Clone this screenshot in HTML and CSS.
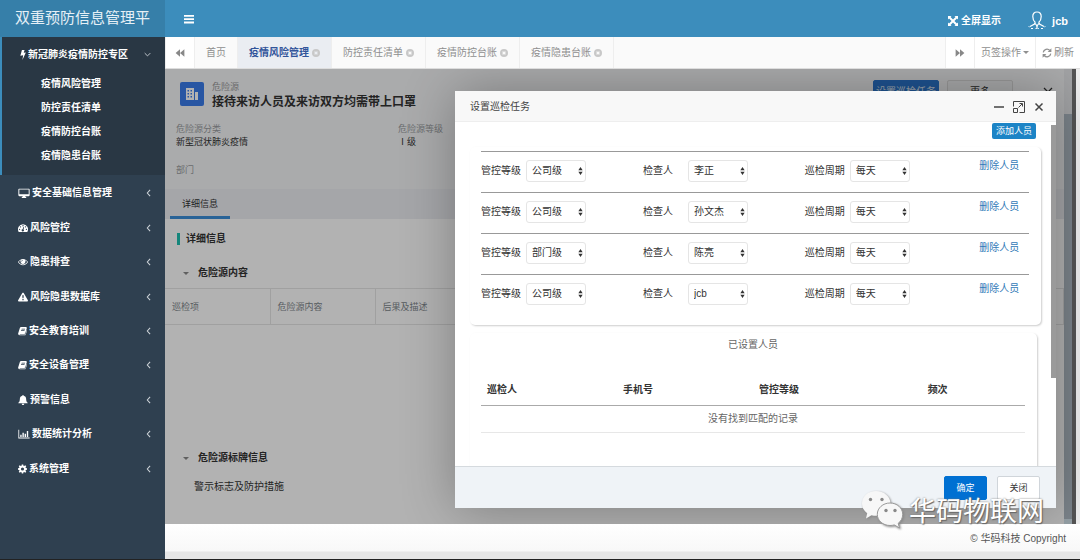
FILE: index.html
```html
<!DOCTYPE html>
<html lang="zh-CN">
<head>
<meta charset="utf-8">
<title>双重预防信息管理平台</title>
<link rel="stylesheet" href="styles.css">
</head>
<body>
<svg class="sprite" aria-hidden="true">
  <symbol id="i-book" viewBox="0 0 16 16"><path fill-rule="evenodd" d="M5.500 1H14c1.400 0 2 1 1.600 2.200L13 12c-.3.900-1 1.400-2 1.400H3.600c-.8 0-.9.900 0 .9H12c.8 0 1.200-.3 1.500-1l2-7c.5.500.6 1 .4 1.700L13.800 14c-.4 1-1.100 1.600-2.200 1.600H3C1 15.600-.3 13.800.4 12L3.300 2.700C3.700 1.600 4.400 1 5.500 1zM6.500 4l-.4 1.300h6.200l.4-1.300zM5.600 6.800 5.200 8h6.200l.4-1.200z"/></symbol>
  <symbol id="i-left" viewBox="0 0 6 10"><path d="M5 1 1.500 5 5 9" fill="none" stroke="currentColor" stroke-width="1.300"/></symbol>
  <symbol id="i-close" viewBox="0 0 16 16"><path fill-rule="evenodd" d="M8 0a8 8 0 1 1 0 16A8 8 0 0 1 8 0zM6 4.400 4.400 6 6 8l-1.600 2L6 11.600 8 10.200l2 1.400 1.600-1.600L10.200 8l1.400-2L10 4.400 8 5.800z"/></symbol>
  <symbol id="i-sort" viewBox="0 0 6 10"><path d="M3 0 5.700 4H.3zM3 10 .3 6h5.400z"/></symbol>
  <symbol id="i-fast" viewBox="0 0 16 16"><path d="M1 2l7 6-7 6zM8 2l7 6-7 6z"/></symbol>
</svg>

<div class="app">
  <aside class="sidebar">
    <div class="brand">双重预防信息管理平</div>
    <nav class="menu" aria-label="主菜单">
      <div class="group">
        <a class="item group-head" href="#"><svg class="bolt" viewBox="0 0 8 14"><path d="M2.500 0h3.700L5 4l3-.6L3.200 14l1-6.500L.3 8z"/></svg><span>新冠肺炎疫情防控专区</span><svg class="down" viewBox="0 0 10 6"><path d="M1 1l4 4 4-4" fill="none" stroke="currentColor" stroke-width="1.300"/></svg></a>
        <a class="sub" href="#">疫情风险管理</a>
        <a class="sub" href="#">防控责任清单</a>
        <a class="sub" href="#">疫情防控台账</a>
        <a class="sub" href="#">疫情隐患台账</a>
      </div>
      <div class="items">
        <a class="item" href="#"><svg class="ico wide" viewBox="0 0 18 16"><path fill-rule="evenodd" d="M1.500 1h15c.8 0 1.500.7 1.500 1.500v9c0 .8-.7 1.500-1.500 1.500H11l.5 1.500h1V16h-7v-1.500h1L7 13H1.500C.7 13 0 12.300 0 11.500v-9C0 1.700.7 1 1.500 1zm0 1.500V10h15V2.500z"/></svg><span>安全基础信息管理</span><svg class="left"><use href="#i-left"/></svg></a>
        <a class="item" href="#"><svg class="ico" viewBox="0 0 16 16"><path fill-rule="evenodd" d="M8 2a8 8 0 0 1 6.800 12.200H1.200A8 8 0 0 1 8 2zM8 3.200a1.100 1.100 0 1 0 0 2.200 1.100 1.100 0 0 0 0-2.200zM4 5a1.100 1.100 0 1 0 0 2.200A1.100 1.100 0 0 0 4 5zm8 0a1.100 1.100 0 1 0 0 2.200A1.100 1.100 0 0 0 12 5zM2.500 9a1.100 1.100 0 1 0 0 2.200A1.100 1.100 0 0 0 2.500 9zm11 0a1.100 1.100 0 1 0 0 2.200 1.100 1.100 0 0 0 0-2.200zM8.600 6.500 7.400 9.800a1.800 1.800 0 1 0 1.400.4l1-3.400z"/></svg><span>风险管控</span><svg class="left"><use href="#i-left"/></svg></a>
        <a class="item" href="#"><svg class="ico" viewBox="0 0 16 16"><path fill-rule="evenodd" d="M8 3c3.500 0 6.500 2.200 8 5-1.500 2.800-4.500 5-8 5S1.500 10.800 0 8c1.500-2.800 4.500-5 8-5zM4.500 5.200C3 6 2 7 1.300 8 2.800 10.300 5.200 11.800 8 11.800s5.200-1.500 6.700-3.800C14 7 13 6 11.500 5.200a4 4 0 1 1-7 0zM8 4.600C6.500 4.600 5.300 5.800 5.300 7.300h1C6.300 6.300 7 5.600 8 5.600z"/></svg><span>隐患排查</span><svg class="left"><use href="#i-left"/></svg></a>
        <a class="item" href="#"><svg class="ico" viewBox="0 0 16 16"><path fill-rule="evenodd" d="M8 1c.5 0 .9.200 1.100.7l6.700 11.500c.5.900-.1 1.800-1.100 1.800H1.300c-1 0-1.600-.9-1.100-1.800L6.900 1.700C7.100 1.200 7.500 1 8 1zM6.800 5l.4 5h1.600l.4-5zm.2 6v2h2v-2z"/></svg><span>风险隐患数据库</span><svg class="left"><use href="#i-left"/></svg></a>
        <a class="item" href="#"><svg class="ico small"><use href="#i-book"/></svg><span>安全教育培训</span><svg class="left"><use href="#i-left"/></svg></a>
        <a class="item" href="#"><svg class="ico small"><use href="#i-book"/></svg><span>安全设备管理</span><svg class="left"><use href="#i-left"/></svg></a>
        <a class="item" href="#"><svg class="ico" viewBox="0 0 16 16"><path d="M8 0c.7 0 1.100.5 1.100 1.200C11.600 1.700 13 3.600 13 6c0 4 1 5.500 2.500 6.500v.8H.5v-.8C2 11.500 3 10 3 6c0-2.400 1.400-4.300 3.900-4.800C6.900.5 7.300 0 8 0zM6 14h4c0 1.200-.8 2-2 2s-2-.8-2-2z"/></svg><span>预警信息</span><svg class="left"><use href="#i-left"/></svg></a>
        <a class="item" href="#"><svg class="ico wide" viewBox="0 0 18 16"><path d="M0 1h1.300v12.700H18V15H0zM3 9h2.200v3.700H3zM6.500 6h2.200v6.700H6.500zM10 7.500h2.200v5.200H10zM13.500 3h2.200v9.700h-2.200z"/></svg><span>数据统计分析</span><svg class="left"><use href="#i-left"/></svg></a>
        <a class="item" href="#"><svg class="ico small" viewBox="0 0 16 16"><path fill-rule="evenodd" d="M6.700 0h2.600l.4 2.200 1.300.5L12.900 1.400l1.800 1.800-1.300 1.900.5 1.200 2.100.4v2.600l-2.100.4-.5 1.300 1.300 1.900-1.800 1.800-1.900-1.300-1.300.5L9.300 16H6.700l-.4-2.100-1.300-.5-1.900 1.300-1.800-1.800L2.600 11l-.5-1.300L0 9.300V6.700l2.100-.4.500-1.200-1.300-1.900 1.800-1.800L5 2.700l1.300-.5zM8 5.200a2.800 2.800 0 1 0 0 5.600 2.800 2.800 0 0 0 0-5.600z"/></svg><span>系统管理</span><svg class="left"><use href="#i-left"/></svg></a>
      </div>
    </nav>
  </aside>

  <div class="main">
    <header class="topbar">
      <button class="burger" aria-label="切换菜单"><svg viewBox="0 0 10 10"><path d="M0 1h10v1.800H0zM0 4.300h10v1.800H0zM0 7.600h10v1.800H0z"/></svg></button>
      <a class="full" href="#"><svg viewBox="0 0 14 14"><path d="M0 0h5L3.500 1.500 7 5l3.500-3.500L9 0h5v5l-1.500-1.500L9 7l3.500 3.500L14 9v5H9l1.500-1.500L7 9l-3.500 3.500L5 14H0V9l1.500 1.500L5 7 1.500 3.500 0 5z"/></svg>全屏显示</a>
      <a class="user" href="#"><svg viewBox="0 0 18 19"><g fill="none" stroke="currentColor" stroke-width="1.200"><path d="M9 1C6 1 4.800 3 4.800 5.500c0 2.400.8 4.400 2.300 5.700L6.500 13 2 15.500M9 1c3 0 4.200 2 4.200 4.500 0 2.400-.8 4.400-2.300 5.700l.6 1.800 4.500 2.500M7.300 12.500 9 15l1.700-2.500"/><path d="M3 17.500h2M7.500 17.500h.8M10 17.500h.8M13 17.500h2M.8 16l.5-.6M16.700 15.400l.5.600M9 15v3"/></g></svg>jcb</a>
    </header>

    <div class="tabs">
      <button class="cell arrow" aria-label="向左"><svg class="flip"><use href="#i-fast"/></svg></button>
      <div class="strip">
        <a class="tab" href="#">首页</a>
        <a class="tab active" href="#">疫情风险管理<svg><use href="#i-close"/></svg></a>
        <a class="tab" href="#">防控责任清单<svg><use href="#i-close"/></svg></a>
        <a class="tab" href="#">疫情防控台账<svg><use href="#i-close"/></svg></a>
        <a class="tab" href="#">疫情隐患台账<svg><use href="#i-close"/></svg></a>
      </div>
      <button class="cell arrow" aria-label="向右"><svg><use href="#i-fast"/></svg></button>
      <button class="cell">页签操作<i class="caret"></i></button>
      <button class="cell"><svg class="refresh" viewBox="0 0 16 16"><path d="M2 7a6 6 0 0 1 10.500-3M14 9A6 6 0 0 1 3.500 12" fill="none" stroke="currentColor" stroke-width="2"/><path d="M15 .5V6.500H9zM1 15.500V9.500h6z"/></svg>刷新</button>
    </div>

    <div class="content">
      <section class="detail">
        <div class="summary">
          <div class="title-row">
            <span class="badge"><svg viewBox="0 0 14 14"><path fill-rule="evenodd" d="M1 1h8v12H1zM2.500 3v1.500H4V3zm3 0v1.500H7V3zm-3 3v1.500H4V6zm3 0v1.500H7V6zm-3 3v1.500H4V9zm3 0v1.500H7V9zM10 5h3v8h-3z"/></svg></span>
            <div class="heading"><small>危险源</small><h1>接待来访人员及来访双方均需带上口罩</h1></div>
            <button class="btn-under primary">设置巡检任务</button>
            <button class="btn-under">更多</button>
            <button class="x-under" aria-label="关闭详情"><svg viewBox="0 0 10 10"><path d="M1 1l8 8M9 1 1 9" stroke="currentColor" stroke-width="1.200"/></svg></button>
          </div>
          <dl class="fields">
            <div><dt>危险源分类</dt><dd>新型冠状肺炎疫情</dd></div>
            <div><dt>危险源等级</dt><dd>Ⅰ级</dd></div>
          </dl>
          <dl class="fields"><div><dt>部门</dt></div></dl>
        </div>
        <div class="subtabs"><a href="#">详细信息</a></div>
        <h2>详细信息</h2>
        <h3><i class="caret"></i>危险源内容</h3>
        <table class="risk">
          <thead><tr><th>巡检项</th><th>危险源内容</th><th>后果及描述</th><th></th></tr></thead>
        </table>
        <h3 class="sign"><i class="caret"></i>危险源标牌信息</h3>
        <p>警示标志及防护措施</p>
      </section>
      <div class="mask"></div>
      <div class="track"></div>
      <div class="edge"></div>

      <div class="modal" role="dialog" aria-labelledby="dlg-title">
        <div class="modal-head">
          <span id="dlg-title">设置巡检任务</span>
          <button aria-label="最小化"><svg viewBox="0 0 12 12"><path d="M1 6h10" stroke="currentColor" stroke-width="1.500"/></svg></button>
          <button aria-label="最大化"><svg viewBox="0 0 12 12"><g fill="none" stroke="currentColor"><path d="M.5 5.500v-5h11v11h-5M.5 7.500h4v4h-4zM5.500 6.500l3.500-3.500M6.500 2.500h3v3"/></g></svg></button>
          <button aria-label="关闭"><svg viewBox="0 0 12 12"><path d="M2.500 2.500l7 7M9.500 2.500l-7 7" stroke="currentColor" stroke-width="1.500"/></svg></button>
        </div>
        <div class="modal-main">
          <div class="modal-body">
            <button class="add">添加人员</button>
            <div class="card people">
              <div class="row">
                <div class="f"><label for="l1">管控等级</label><span class="sel"><select id="l1"><option>公司级</option></select><svg><use href="#i-sort"/></svg></span></div>
                <div class="f"><label for="p1">检查人</label><span class="sel"><select id="p1"><option>李正</option></select><svg><use href="#i-sort"/></svg></span></div>
                <div class="f"><label for="c1">巡检周期</label><span class="sel"><select id="c1"><option>每天</option></select><svg><use href="#i-sort"/></svg></span></div>
                <a href="#">删除人员</a>
              </div>
              <div class="row">
                <div class="f"><label for="l2">管控等级</label><span class="sel"><select id="l2"><option>公司级</option></select><svg><use href="#i-sort"/></svg></span></div>
                <div class="f"><label for="p2">检查人</label><span class="sel"><select id="p2"><option>孙文杰</option></select><svg><use href="#i-sort"/></svg></span></div>
                <div class="f"><label for="c2">巡检周期</label><span class="sel"><select id="c2"><option>每天</option></select><svg><use href="#i-sort"/></svg></span></div>
                <a href="#">删除人员</a>
              </div>
              <div class="row">
                <div class="f"><label for="l3">管控等级</label><span class="sel"><select id="l3"><option>部门级</option></select><svg><use href="#i-sort"/></svg></span></div>
                <div class="f"><label for="p3">检查人</label><span class="sel"><select id="p3"><option>陈亮</option></select><svg><use href="#i-sort"/></svg></span></div>
                <div class="f"><label for="c3">巡检周期</label><span class="sel"><select id="c3"><option>每天</option></select><svg><use href="#i-sort"/></svg></span></div>
                <a href="#">删除人员</a>
              </div>
              <div class="row">
                <div class="f"><label for="l4">管控等级</label><span class="sel"><select id="l4"><option>公司级</option></select><svg><use href="#i-sort"/></svg></span></div>
                <div class="f"><label for="p4">检查人</label><span class="sel"><select id="p4"><option>jcb</option></select><svg><use href="#i-sort"/></svg></span></div>
                <div class="f"><label for="c4">巡检周期</label><span class="sel"><select id="c4"><option>每天</option></select><svg><use href="#i-sort"/></svg></span></div>
                <a href="#">删除人员</a>
              </div>
            </div>
            <div class="card assigned">
              <div class="card-title">已设置人员</div>
              <table>
                <thead><tr><th>巡检人</th><th>手机号</th><th>管控等级</th><th>频次</th></tr></thead>
                <tbody><tr><td colspan="4">没有找到匹配的记录</td></tr></tbody>
              </table>
            </div>
          </div>
          <div class="bar"><div class="thumb"></div></div>
        </div>
        <div class="modal-foot">
          <button class="ok">确定</button>
          <button class="cancel">关闭</button>
        </div>
      </div>
    </div>

    <footer class="footer">© 华码科技 Copyright</footer>

    <div class="watermark">
      <svg viewBox="0 0 42 40">
        <path d="M15 1C7 1 1 6.400 1 13.500c0 4 2 7.500 5.200 9.700L5 28.500l5.500-3.300c1.400.4 3 .6 4.500.6 8 0 14.500-5.300 14.500-12.300S23 1 15 1z"/>
        <path class="front" d="M29 13c-7 0-12.700 5-12.700 11.300S22 35.500 29 35.500c1.500 0 3-.2 4.300-.6L38.500 38l-1.300-4.700c2.800-2 4.500-5.300 4.500-9C41.700 18 36 13 29 13z"/>
        <g class="eye"><circle cx="9.500" cy="9.500" r="1.700"/><circle cx="21" cy="9.500" r="1.700"/><circle cx="25" cy="20.500" r="1.700"/><circle cx="34" cy="20.500" r="1.700"/></g>
      </svg>
      <span>华码物联网</span>
    </div>
  </div>
</div>
</body>
</html>
```

FILE: styles.css
```css
* { box-sizing: border-box; }

body {
  margin: 0;
  font: 10px/14px "Liberation Sans", "Noto Sans CJK SC", sans-serif;
  color: #333;
}

a { color: inherit; text-decoration: none; }
svg { display: block; fill: currentColor; flex: none; }
button { font: inherit; color: inherit; background: none; border: 0; padding: 0; }
h1, h2, h3, p, dl, dd { margin: 0; }
table { border-collapse: collapse; table-layout: fixed; width: 100%; }
.sprite { display: none; }

.app {
  display: grid;
  grid-template-columns: 165px 1fr;
  min-height: 100vh;
  border-bottom: 1px solid #222;
}

/* sidebar */
.sidebar { display: flex; flex-direction: column; background: #2f4050; color: #fff; }
.brand {
  height: 37px;
  padding-left: 15px;
  background: #367fa9;
  color: #e6f0f6;
  font-size: 15px;
  line-height: 36px;
  white-space: nowrap;
}
.menu { flex: 1; display: flex; flex-direction: column; font-weight: bold; }
.group { padding-bottom: 7px; border-left: 2px solid #3c8dbc; background: #293744; }
.item { display: flex; align-items: center; gap: 2px; padding: 0 14px 0 18px; }
.item span { flex: 1; white-space: nowrap; }
.group-head { height: 35px; padding-left: 18px; gap: 2px; }
.bolt { width: 6px; height: 10px; }
.down { width: 7px; height: 5px; color: #cdd3d8; }
.left { width: 5px; height: 8px; color: #cdd3d8; }
.sub { display: block; padding-left: 39px; line-height: 24px; }
.items { flex: 1; display: flex; flex-direction: column; padding: 1px 0 73px; }
.items .item { flex: 1; }
.ico { width: 10px; height: 10px; }
.ico.wide { width: 12px; }
.ico.small { width: 9px; }

/* top bar */
.main { position: relative; display: flex; flex-direction: column; min-width: 0; }
.topbar {
  display: flex;
  align-items: center;
  height: 37px;
  padding: 0 12px 0 19px;
  background: #3c8dbc;
  color: #fff;
  font-weight: bold;
}
.burger { margin-right: auto; }
.burger svg { width: 10px; height: 10px; }
.full, .user { display: flex; align-items: center; gap: 3px; padding-top: 4px; }
.full svg { width: 10px; height: 10px; }
.user { gap: 6px; margin-left: 27px; font-size: 11px; }
.user svg { width: 18px; height: 19px; }

/* page tabs */
.tabs {
  display: flex;
  height: 32px;
  background: #fafafa;
  border-bottom: 1px solid #ddd;
  color: #8f8f8f;
}
.strip { flex: 1; display: flex; border-left: 1px solid #eee; }
.tab {
  display: flex;
  align-items: center;
  gap: 3px;
  padding: 0 11px;
  border-right: 1px solid #eee;
  white-space: nowrap;
}
.tab svg { width: 8px; height: 8px; color: #c8c8c8; }
.tab.active { background: #eaedf2; color: #31549a; font-weight: bold; }
.cell {
  display: flex;
  align-items: center;
  gap: 2px;
  padding: 0 6px;
  border-left: 1px solid #eee;
  background: #fff;
  white-space: nowrap;
}
.cell.arrow { padding: 0 9px; }
.cell.arrow svg { width: 10px; height: 10px; color: #888; }
.flip { transform: rotate(180deg); }
.refresh { width: 10px; height: 10px; }
.caret {
  border: 3px solid transparent;
  border-top: 3px solid currentColor;
  border-bottom: 0;
}

/* hazard details */
.content {
  position: relative;
  flex: 1;
  display: grid;
  grid-template-columns: 1fr 8px 4px;
  padding-right: 4px;
  overflow: hidden;
  background: #f0f0f0;
}
.detail { grid-area: 1 / 1; background: #fff; min-width: 0; }
.mask { grid-area: 1 / 1; background: rgba(0, 0, 0, 0.3); }
.track {
  grid-area: 1 / 2;
  border-top: 45px solid #a2a3a5;
  border-bottom: 5px solid #95a0a6;
  background: #7b838a;
}
.edge { grid-area: 1 / 3; background: #555; }

.summary { height: 120px; padding: 11px 0 0 11px; background: #f4f5f7; }
.title-row { display: flex; align-items: flex-start; gap: 8px; height: 42px; padding-right: 11px; }
.badge {
  display: grid;
  place-items: center;
  width: 24px;
  height: 24px;
  margin: 2px 0 0 4px;
  border-radius: 2px;
  background: #3a7bea;
  color: #fff;
}
.badge svg { width: 14px; height: 14px; }
.heading { flex: 1; }
.heading small { display: block; font-size: 9px; color: #999; }
h1 { font-size: 12px; line-height: 16px; }
.btn-under {
  width: 66px;
  height: 24px;
  border: 1px solid #d8d8d8;
  border-radius: 2px;
  background: #f0f1f2;
}
.btn-under.primary { border-color: #2c76cf; background: #2c76cf; color: #dce8f6; }
.x-under { margin: 7px 0 0 22px; }
.x-under svg { width: 10px; height: 10px; }
.fields { display: grid; grid-template-columns: repeat(4, 1fr); font-size: 9px; min-height: 41px; }
.fields dt { color: #9a9da1; }
.fields dd { line-height: 12px; }
.subtabs { display: flex; height: 30px; padding-left: 5px; background: #edeef3; font-size: 9px; }
.subtabs a { padding: 1px 12px 0; border-bottom: 3px solid #3c8fd9; line-height: 29px; }
h2 {
  margin: 14px 0 0 12px;
  padding-left: 6px;
  border-left: 3px solid #1fc0b0;
  font-size: 10px;
  line-height: 12px;
}
h3 {
  display: flex;
  align-items: center;
  gap: 9px;
  margin-top: 13px;
  padding-left: 18px;
  font-size: 10px;
  line-height: 30px;
}
h3 .caret { color: #888; }
.risk th {
  width: 105px;
  height: 36px;
  padding: 0 8px 0 7px;
  border: 1px solid #e6e6e6;
  border-left: 0;
  color: #80868c;
  font-size: 9px;
  font-weight: normal;
  text-align: left;
}
.risk th:last-child { width: auto; }
.sign { margin-top: 118px; }
.detail p { padding-left: 29px; line-height: 27px; }

/* dialog */
.modal {
  position: absolute;
  inset: 22px 24px 16px 290px;
  display: flex;
  flex-direction: column;
  background: #fff;
  box-shadow: 1px 1px 50px rgba(0, 0, 0, 0.3);
}
.modal-head {
  display: flex;
  align-items: center;
  gap: 8px;
  height: 31px;
  padding: 1px 11px 0 15px;
  background: #f8f8f8;
  border-bottom: 1px solid #eee;
  color: #444;
}
.modal-head span { flex: 1; }
.modal-head svg { width: 12px; height: 12px; }
.modal-main { flex: 1; display: flex; min-height: 0; }
.modal-body { flex: 1; padding: 1px 10px 0 15px; overflow: hidden; }
.add {
  display: block;
  margin: 0 5px 8px auto;
  padding: 1px 4px;
  border-radius: 2px;
  background: #1c84c6;
  color: #fff;
  font-size: 9px;
}
.bar { width: 5px; padding-top: 3px; background: #fff; }
.thumb { height: 253px; background: #9a9a9a; }
.card {
  padding: 4px 12px 10px 11px;
  border-radius: 5px;
  box-shadow: 1px 1px 2px rgba(0, 0, 0, 0.2);
}
.row {
  display: grid;
  grid-template-columns: 13fr 13fr 14fr 4fr;
  height: 41px;
  border-top: 1px solid #999;
}
.f { display: flex; align-items: center; padding-bottom: 2px; }
.f label { width: 45px; }
.sel { display: grid; align-items: center; width: 60px; }
.sel select {
  grid-area: 1 / 1;
  height: 22px;
  padding: 0 5px;
  border: 1px solid #e5e5e5;
  border-radius: 3px;
  background: #fff;
  color: #333;
  font: inherit;
  appearance: none;
}
.sel svg { grid-area: 1 / 1; justify-self: end; width: 5px; height: 8px; margin-right: 3px; pointer-events: none; }
.row a { padding-top: 7px; color: #337ab7; }
.assigned { height: 160px; margin: 8px 4px 0 0; padding: 5px 12px 0 11px; }
.card-title { color: #666; text-align: center; }
.assigned table { margin-top: 22px; }
.assigned th { width: 25%; height: 31px; padding: 2px 6px 0; border-bottom: 1px solid #aaa; text-align: left; }
.assigned th:nth-child(3) { width: 31%; }
.assigned th:last-child { width: auto; }
.assigned td { height: 27px; padding: 0; border-bottom: 1px solid #e7e7e7; color: #666; text-align: center; }
.modal-foot {
  display: flex;
  justify-content: flex-end;
  align-items: center;
  gap: 10px;
  height: 42px;
  padding-right: 16px;
  background: #eff3f7;
  border-top: 1px solid #d5dade;
}
.modal-foot button {
  width: 43px;
  height: 24px;
  border: 1px solid #d0d5da;
  border-radius: 2px;
  background: #fff;
  font-size: 9px;
}
.modal-foot .ok { border-color: #0070d2; background: #0070d2; color: #fff; }

/* footer */
.footer {
  height: 35px;
  padding: 8px 14px 0 0;
  background: linear-gradient(#fff, #f8f8f8 27px, #e6e6e6 28px);
  color: #555;
  text-align: right;
}
.watermark {
  position: absolute;
  right: 36px;
  bottom: 29px;
  display: flex;
  align-items: center;
  gap: 6px;
  color: #fff;
  font-size: 27px;
  line-height: 36px;
  text-shadow: 1px 1px 1px #666, 0 0 2px #777;
  pointer-events: none;
}
.watermark span { padding-top: 5px; }
.watermark svg { width: 42px; height: 40px; fill: #f7f7f7; filter: drop-shadow(1px 1px 1px #888); }
.watermark .front { stroke: #999; }
.watermark .eye { fill: #888; }
```
